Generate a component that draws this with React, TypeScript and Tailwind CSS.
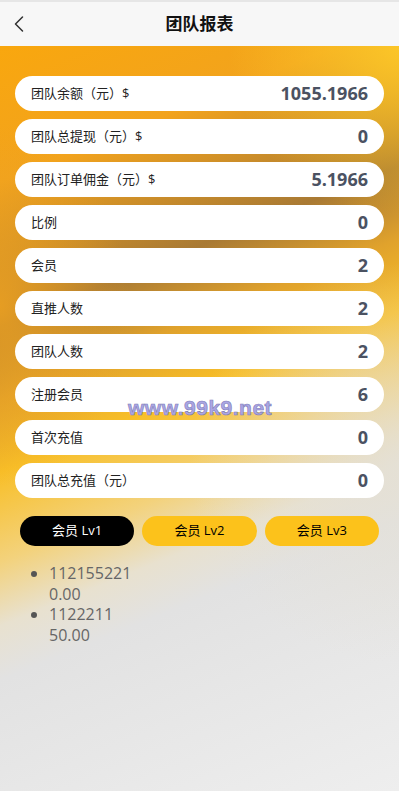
import { ChevronLeft } from 'lucide-react';
import { useState } from 'react';

const rows = [
  { label: '团队余额（元）$', value: '1055.1966' },
  { label: '团队总提现（元）$', value: '0' },
  { label: '团队订单佣金（元）$', value: '5.1966' },
  { label: '比例', value: '0' },
  { label: '会员', value: '2' },
  { label: '直推人数', value: '2' },
  { label: '团队人数', value: '2' },
  { label: '注册会员', value: '6' },
  { label: '首次充值', value: '0' },
  { label: '团队总充值（元）', value: '0' },
];

const members = [
  { id: '112155221', amount: '0.00' },
  { id: '1122211', amount: '50.00' },
];

export default function App() {
  const [level, setLevel] = useState(1);

  return (
    <div className="min-h-screen flex flex-col bg-[#eeeeee] font-['Open_Sans','Noto_Sans_CJK_SC',sans-serif]">
      <div className="h-[46px] flex items-center relative bg-[#f7f7f7] border-t-2 border-[#e6e6e6]">
        <ChevronLeft size={28} strokeWidth={1.3} className="absolute left-[5px] text-[#333]" />
        <h1 className="flex-1 text-center text-[17px] font-bold text-[#111]">团队报表</h1>
      </div>

      <div className="relative flex-1 pt-[30px] bg-[radial-gradient(circle_at_100%_0%,rgba(253,200,40,0.95)_0px,rgba(253,200,40,0)_170px),radial-gradient(ellipse_130px_180px_at_0%_35%,rgba(238,162,32,0.85)_0%,rgba(238,162,32,0)_100%),radial-gradient(ellipse_210px_200px_at_100%_56%,rgba(228,224,214,0.85)_0%,rgba(228,224,214,0)_100%),linear-gradient(158deg,#f9a70e_0%,#f2a31d_15%,#a97a34_31%,#e0a22c_39%,#f8bf28_47%,#f3d27c_57%,#e8e1cf_64%,#e2e2e2_70%,#eeeeee_100%)]">
        <div className="flex flex-col gap-2 px-[15px]">
          {rows.map((r) => (
            <div
              key={r.label}
              className="h-[35px] flex items-center justify-between bg-white rounded-full pl-4 pr-4"
            >
              <span className="text-[13px] text-[#222]">{r.label}</span>
              <span className="text-[18px] font-bold text-[#4b5262]">{r.value}</span>
            </div>
          ))}
        </div>

        <div className="flex gap-2 px-5 mt-[18px]">
          {[1, 2, 3].map((lv) => (
            <button
              key={lv}
              onClick={() => setLevel(lv)}
              className={
                lv === level
                  ? 'flex-1 h-[30px] rounded-full bg-black text-white text-[13px]'
                  : 'flex-1 h-[30px] rounded-full bg-[#fcc21b] text-black text-[13px]'
              }
            >
              会员 Lv{lv}
            </button>
          ))}
        </div>

        <ul className="list-disc pl-[49px] mt-[17px] text-[16px] leading-[20.5px] text-[#666] marker:text-[#555]">
          {members.map((m) => (
            <li key={m.id}>
              <div>{m.id}</div>
              <div>{m.amount}</div>
            </li>
          ))}
        </ul>

        <div className="absolute left-[128px] top-[346px] text-[21px] font-bold tracking-[0.5px] text-[#aaa6e4] font-['Liberation_Sans',sans-serif] [-webkit-text-stroke:0.6px_#7f7cb8]">
          www.99k9.net
        </div>
      </div>
    </div>
  );
}
